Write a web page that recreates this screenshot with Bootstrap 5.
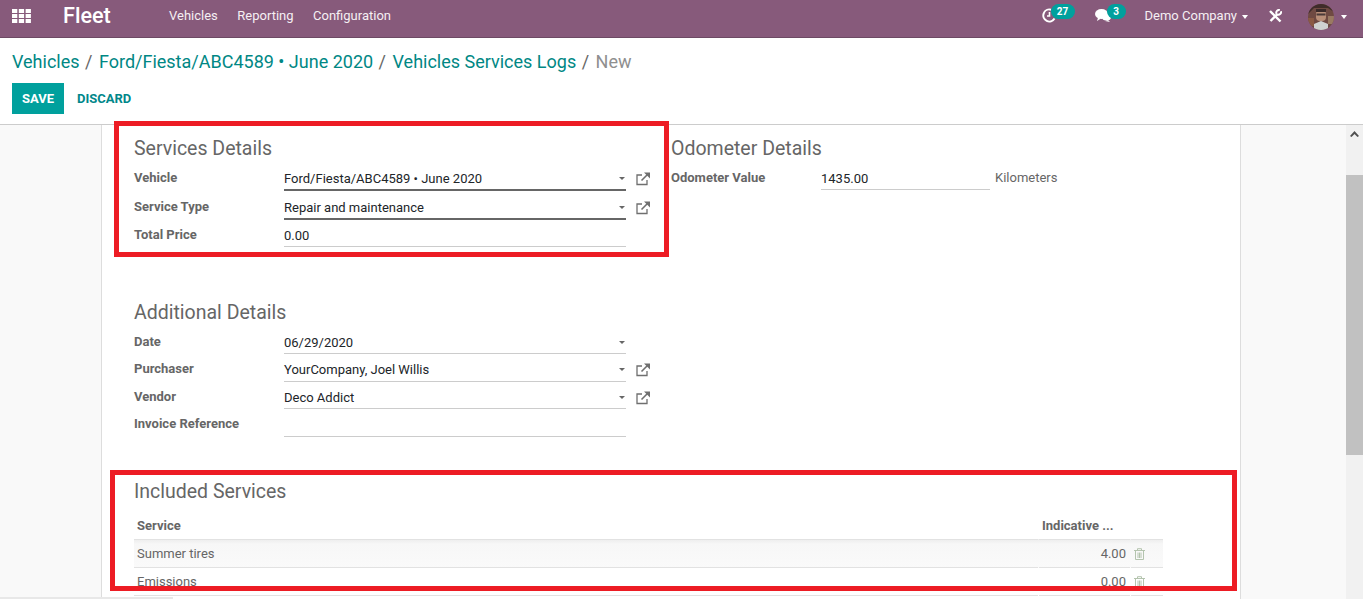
<!DOCTYPE html>
<html lang="en"><head><meta charset="utf-8"><title>Fleet</title>
<link href="https://cdn.jsdelivr.net/npm/bootstrap@5.3.0/dist/css/bootstrap.min.css" rel="stylesheet">
<style>
html,body{height:599px;overflow:hidden}
body{font-family:Roboto,"Liberation Sans",sans-serif;font-size:13px;color:#4c4c4c;background:#f9f9f9;position:relative}
.top-bar{height:38px;background:#875a7b;border-bottom:1px solid #6d4a64;color:#fff;padding:0 16px 4px 0}
.apps{margin-left:12px;width:19px;height:14px;margin-top:-1px}
.brand-name{font-size:21.6px;font-weight:500;margin-left:32px;width:106px;margin-top:-1px}
.menu-a{color:#f5eff3;font-size:13px;margin-right:19.5px;margin-top:-1px}
.sys{position:relative;color:#fff;height:20px}
.sys svg{display:block;margin-top:1px}
.sys-a{width:53px}
.sys-b{width:50px}
.pill{position:absolute;top:-3px;background:#00a09d;color:#fff;font-size:10px;font-weight:700;border-radius:10px;height:15px;line-height:15px;text-align:center}
.pill-a{left:9px;width:24px}
.pill-b{left:12px;width:19px}
.caret-w{display:inline-block;border-top:4px solid #fff;border-left:3.5px solid transparent;border-right:3.5px solid transparent;vertical-align:middle}
.caret-end{margin-left:7px}
.co-name{color:#f5eff3;margin-top:-1px;margin-right:4.5px}
.tool{margin:-1px 0 0 20.5px}
.avatar{width:26px;height:26px;margin-left:26px;display:block}
.ctrl{height:87px;background:#fff;border-bottom:1px solid #ccc;padding:12px 12px 0}
.crumbs{font-size:18px;line-height:24px;height:33px;white-space:nowrap}
.crumbs a{color:#008784;text-decoration:none}
.crumbs i{font-style:normal;margin:0 2px 0 1px;color:#666}
.crumbs span{color:#8f8f8f}
.act{font-size:13px;font-weight:700;height:31px;border-radius:0;padding:0 10px;line-height:31px;border:0}
.act-save,.act-save:hover{background:#00a09d;color:#fff}
.act-disc,.act-disc:hover{background:transparent;color:#00878a;margin-left:3px}
.work{height:474px;overflow:hidden}
.scroll-pane{flex:1 1 auto;padding-left:101px;min-width:0}
.sheet{box-sizing:content-box;width:1074px;height:474px;background:#fff;border-left:1px solid #ddd;border-right:1px solid #ddd;padding:0 32px;overflow:hidden}
.sheet-top{display:flex;padding-top:12px}
.side-track{width:17px;background:#f1f1f1}
.side-arrow{height:17px;display:flex;align-items:center;justify-content:center}
.side-thumb{height:280px;margin-top:33px;background:#c1c1c1}
.sect{font-size:19.5px;line-height:24px;color:#666;font-weight:400;margin:0}
.sect-add{margin-top:54px}
.sect-inc{margin-top:43px}
.lbl{width:150px;font-weight:700;color:#666;flex:none;line-height:17px;padding-top:1px}
.lbl-low{padding-top:2px}
.frow{display:flex;align-items:flex-start}
.gap4{margin-top:4px}
.gap5{margin-top:5px}
.gap6{margin-top:6px}
.gap7{margin-top:7px}
.val{width:342px;color:#212529;display:flex;justify-content:space-between;align-items:center;padding-right:1px;line-height:17px;height:22px;border-bottom:1px solid #ccc}
.val.strong{border-bottom:2px solid #666;height:23px}
.val.tall{height:23px}
.val.lift{padding-bottom:1px}
.val.short{width:169px}
.unit{margin-left:5px;color:#666;line-height:20px}
.down{width:0;height:0;border-top:3.5px solid #666;border-left:3px solid transparent;border-right:3px solid transparent}
.extern{margin:4px 0 0 10px;width:14px;height:14px;flex:none}
.col-left{width:537px;flex:none}
.table-wrap{width:1029px;margin-top:8px}
.t-row{display:flex;align-items:stretch;color:#666}
.t-head{height:27px;font-weight:700}
.t-first{background:linear-gradient(#ececec 0,#f7f7f7 5px,#fafafa 100%)}
.t-name,.t-num,.t-last{display:flex;align-items:center;border-bottom:1px solid #e2e2e2;height:28px}
.t-first .t-name,.t-first .t-num,.t-first .t-last{border-top:1px solid #e2e2e2;height:29px}
.t-head .t-name,.t-head .t-num,.t-head .t-last{border:0;height:27px}
.t-name{flex:1 1 auto;padding-left:3px}
.t-num{width:91px;flex:none;margin-left:1px;padding:0 4px 0 3px;justify-content:flex-end}
.t-head .t-num{justify-content:flex-start;white-space:nowrap}
.t-last{width:32px;flex:none;margin-left:1px;padding-left:3px}
.flag{position:absolute;border:5px solid #ed1c24;pointer-events:none}
.flag-a{left:114px;top:121px;width:555px;height:136px}
.flag-b{left:110px;top:470px;width:1127px;height:121px}
.foot-line{position:absolute;left:0;bottom:0;width:173px;height:2px;background:#e8e8e8}
</style></head><body>
<svg width="0" height="0" class="d-block position-absolute"><defs>
<symbol id="ext" viewBox="0 0 14 14"><path fill="none" stroke="#6f6f6f" stroke-width="1.3" d="M11 8v4.500H1V3H6"/><path fill="none" stroke="#6f6f6f" stroke-width="1.6" d="M5.500 8.500 12 2"/><path fill="#6f6f6f" d="M8 .5H14V6.500Z"/></symbol>
<symbol id="bin" viewBox="0 0 11 12"><path fill="none" stroke="#b4c4ae" stroke-width="1" d="M0 2.500H11M3.500 2.500V.7H7.500V2.500M1.500 2.500V11.500H9.500V2.500M4 4.500V10M5.500 4.500V10M7 4.500V10"/></symbol>
</defs></svg>
<nav class="top-bar d-flex align-items-center">
<svg class="apps" viewBox="0 0 19 14" fill="#fff"><rect x="0" width="5.3" height="4"/><rect x="6.8" width="5.3" height="4"/><rect x="13.6" width="5.3" height="4"/><rect x="0" y="5" width="5.3" height="4"/><rect x="6.8" y="5" width="5.3" height="4"/><rect x="13.6" y="5" width="5.3" height="4"/><rect x="0" y="10" width="5.3" height="4"/><rect x="6.8" y="10" width="5.3" height="4"/><rect x="13.6" y="10" width="5.3" height="4"/></svg>
<div class="brand-name">Fleet</div>
<a href="#" class="menu-a text-decoration-none">Vehicles</a><a href="#" class="menu-a text-decoration-none">Reporting</a><a href="#" class="menu-a text-decoration-none">Configuration</a>
<div class="ms-auto d-flex align-items-center">
<div class="sys sys-a">
<svg width="15" height="15" viewBox="0 0 15 15" fill="none" stroke="#fff" stroke-width="2"><path d="M12.500 10.500A6 6 0 1 1 9 1.700"/><path d="M7.500 4v4H5" stroke-width="1.600"/></svg>
<span class="pill pill-a">27</span></div>
<div class="sys sys-b">
<svg width="17" height="15" viewBox="0 0 17 15" fill="#fff"><ellipse cx="6.500" cy="6" rx="6.500" ry="5"/><path d="M3 9.500 2 13l4-2.500zM13 12l2 2-5-1z"/><ellipse cx="11.500" cy="9" rx="4.500" ry="3.500"/></svg>
<span class="pill pill-b">3</span></div>
<span class="co-name">Demo Company</span><span class="caret-w"></span>
<svg class="tool" width="14" height="14" viewBox="0 0 14 14" fill="none" stroke="#fff"><path stroke-width="2.400" d="M2 2 12.500 12.500"/><path stroke-width="2.400" d="M2.500 12 9.500 5"/><path stroke-width="2" d="M13 2.200a2.800 2.800 0 0 1-3.800 3.300M11.800 1a2.800 2.800 0 0 0-3.300 3.800"/></svg>
<svg class="avatar" viewBox="0 0 26 26"><defs><clipPath id="round"><circle cx="13" cy="13" r="13"/></clipPath></defs><g clip-path="url(#round)"><rect width="26" height="26" fill="#6f4a42"/><path d="M0 0H26V8L20 4H6L0 10Z" fill="#3f2c2a"/><path d="M6 26V20L13 17 20 20V26Z" fill="#cfd2d0"/><rect x="8" y="6" width="10" height="11" rx="4" fill="#b98f78"/><rect x="8" y="5" width="10" height="3" fill="#3a2a2a"/><rect x="8.500" y="9.500" width="9" height="2" fill="#4a3a38"/><rect x="0" y="14" width="6" height="8" fill="#8a5a44"/><rect x="20" y="12" width="6" height="8" fill="#9a7a62"/></g></svg>
<span class="caret-w caret-end"></span>
</div>
</nav>
<header class="ctrl">
<div class="crumbs"><a href="#">Vehicles</a> <i>/</i> <a href="#">Ford/Fiesta/ABC4589 • June 2020</a> <i>/</i> <a href="#">Vehicles Services Logs</a> <i>/</i> <span>New</span></div>
<div class="d-flex"><button class="btn act act-save">SAVE</button><button class="btn act act-disc">DISCARD</button></div>
</header>
<div class="work d-flex">
<div class="scroll-pane">
<div class="sheet">
<div class="sheet-top">
<div class="col-left">
<h2 class="sect">Services Details</h2>
<div class="frow gap7"><div class="lbl">Vehicle</div><div class="val strong"><span>Ford/Fiesta/ABC4589 • June 2020</span><span class="down"></span></div><svg class="extern"><use href="#ext"/></svg></div>
<div class="frow gap6"><div class="lbl">Service Type</div><div class="val strong"><span>Repair and maintenance</span><span class="down"></span></div><svg class="extern"><use href="#ext"/></svg></div>
<div class="frow gap4"><div class="lbl lbl-low">Total Price</div><div class="val tall"><span>0.00</span></div></div>
</div>
<div>
<h2 class="sect">Odometer Details</h2>
<div class="frow gap7"><div class="lbl">Odometer Value</div><div class="val short"><span>1435.00</span></div><div class="unit">Kilometers</div></div>
</div>
</div>
<h2 class="sect sect-add">Additional Details</h2>
<div class="frow gap7"><div class="lbl">Date</div><div class="val"><span>06/29/2020</span><span class="down"></span></div></div>
<div class="frow gap5"><div class="lbl">Purchaser</div><div class="val tall lift"><span>YourCompany, Joel Willis</span><span class="down"></span></div><svg class="extern"><use href="#ext"/></svg></div>
<div class="frow gap5"><div class="lbl">Vendor</div><div class="val"><span>Deco Addict</span><span class="down"></span></div><svg class="extern"><use href="#ext"/></svg></div>
<div class="frow gap5"><div class="lbl">Invoice Reference</div><div class="val tall"></div></div>
<h2 class="sect sect-inc">Included Services</h2>
<div class="table-wrap">
<div class="t-row t-head"><div class="t-name">Service</div><div class="t-num">Indicative ...</div><div class="t-last"></div></div>
<div class="t-row t-first"><div class="t-name">Summer tires</div><div class="t-num">4.00</div><div class="t-last"><svg width="11" height="12"><use href="#bin"/></svg></div></div>
<div class="t-row"><div class="t-name">Emissions</div><div class="t-num">0.00</div><div class="t-last"><svg width="11" height="12"><use href="#bin"/></svg></div></div>
</div>
</div>
</div>
<aside class="side-track"><div class="side-arrow"><svg width="9" height="6" viewBox="0 0 9 6" fill="#505050"><path d="M4.500 0 9 5 7.500 6 4.500 3 1.500 6 0 5z"/></svg></div><div class="side-thumb"></div></aside>
</div>
<div class="flag flag-a"></div><div class="flag flag-b"></div><div class="foot-line"></div>
<script src="https://cdn.jsdelivr.net/npm/bootstrap@5.3.0/dist/js/bootstrap.bundle.min.js"></script>
</body></html>
